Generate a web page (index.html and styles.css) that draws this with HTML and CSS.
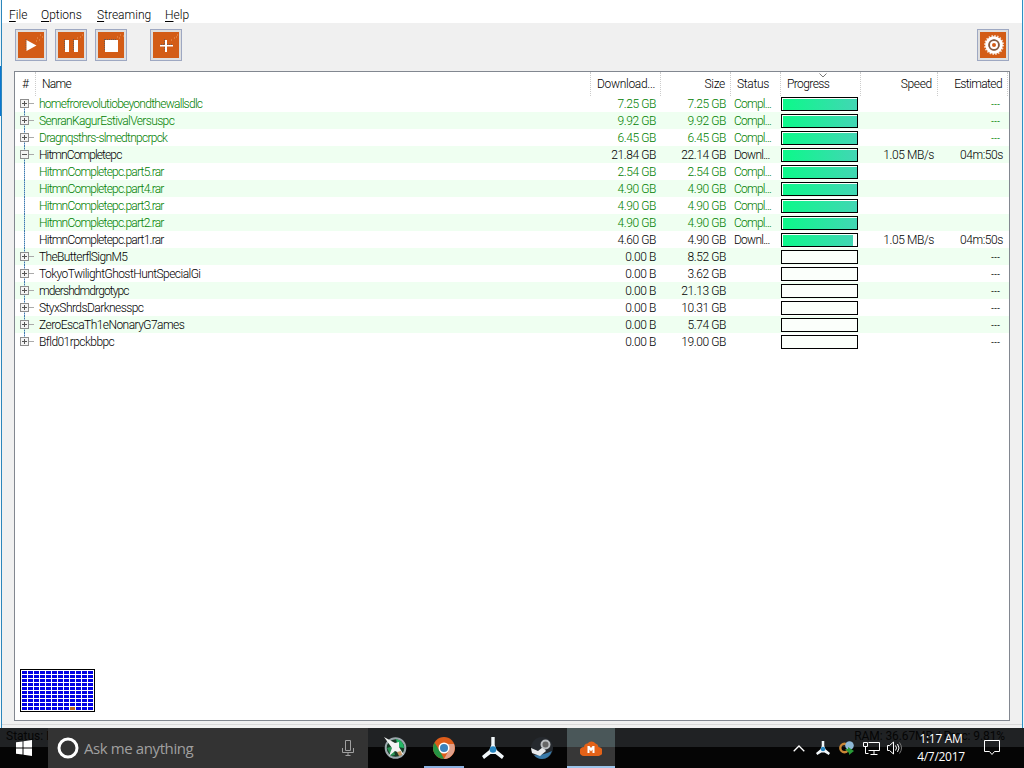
FILE: index.html
```html
<!DOCTYPE html>
<html lang="en">
<head>
  <meta charset="UTF-8">
  <meta name="viewport" content="width=device-width, initial-scale=1.0">
  <title>Downloads</title>
  <link rel="stylesheet" href="styles.css">
</head>
<body>
  <div class="window">
    <div class="menu">
      <span class="m-file"><u>F</u>ile</span>
      <span class="m-options"><u>O</u>ptions</span>
      <span class="m-streaming"><u>S</u>treaming</span>
      <span class="m-help"><u>H</u>elp</span>
    </div>

    <div class="toolbar">
      <button class="tool"><svg width="26" height="26" viewBox="0 0 26 26"><path class="shade" d="M8 7v12"/><path class="white" d="M8.500 8L18.500 13.500L8.500 19z"/><path class="sparkle" d="M19 6h1M21 8h1M22 3h1M24 5h1M18 9h1"/></svg></button>
      <button class="tool"><svg width="26" height="26" viewBox="0 0 26 26"><path class="shade" d="M6.500 7v12M15.500 7v12"/><path class="white" d="M7 8h4v12H7zM16 8h4v12h-4z"/><path class="sparkle" d="M19 6h1M22 5h1M24 3h1"/></svg></button>
      <button class="tool"><svg width="26" height="26" viewBox="0 0 26 26"><path class="shade" d="M6.500 7v12M7 7.500h12"/><path class="white" d="M7 8h13v12H7z"/><path class="sparkle" d="M19 5h1M21 6h1M22 3h1M25 4h1"/></svg></button>
      <button class="tool add"><svg width="26" height="26" viewBox="0 0 26 26"><path class="shade" d="M11.500 7v12M8 12.500h11"/><path class="white" d="M12 8h2v5h6v1.500h-6V20h-2v-5.500H7V13h5z"/><path class="sparkle" d="M18 8h1M21 6h1M23 5h1M24 3h1"/></svg></button>
      <button class="tool settings"><svg width="26" height="26" viewBox="0 0 26 26"><circle cx="14" cy="13" r="9" fill="none" stroke="#f3d9c8" stroke-width="2" stroke-dasharray="1.500 1.327"/><circle cx="14" cy="13" r="7.200" fill="none" stroke="#fff" stroke-width="3.200"/><circle cx="14" cy="13" r="4.800" fill="none" stroke="#7b5c49" stroke-width="1.800"/><circle cx="14" cy="13" r="3" fill="none" stroke="#fff" stroke-width="2"/></svg></button>
    </div>

    <div class="list">
      <div class="head">
        <span class="hash">#</span><span class="name">Name</span><span class="num">Download...</span><span class="num">Size</span><span>Status</span><span class="sorted">Progress<svg width="8" height="5" viewBox="0 0 8 5"><path d="M.5.500L4 4L7.500.500" fill="none" stroke="#777"/></svg></span><span class="num">Speed</span><span class="num estimated">Estimated</span>
      </div>
      <div class="rows">
        <div class="row done"><i class="node"></i><span class="name w1">homefrorevolutiobeyondthewallsdlc</span><span class="num">7.25 GB</span><span class="num">7.25 GB</span><span class="status">Compl...</span><div class="bar"><b></b></div><span></span><span class="num none">---</span></div>
        <div class="row done"><i class="node"></i><span class="name w2">SenranKagurEstivalVersuspc</span><span class="num">9.92 GB</span><span class="num">9.92 GB</span><span class="status">Compl...</span><div class="bar"><b></b></div><span></span><span class="num none">---</span></div>
        <div class="row done"><i class="node"></i><span class="name w1">Dragnqsthrs-slmedtnpcrpck</span><span class="num">6.45 GB</span><span class="num">6.45 GB</span><span class="status">Compl...</span><div class="bar"><b></b></div><span></span><span class="num none">---</span></div>
        <div class="row"><i class="node open"></i><span class="name w3">HitmnCompletepc</span><span class="num">21.84 GB</span><span class="num">22.14 GB</span><span class="status">Downl...</span><div class="bar"><b></b></div><span class="num speed">1.05 MB/s</span><span class="num">04m:50s</span></div>
        <div class="row done"><i class="line"></i><span class="name part">HitmnCompletepc.part5.rar</span><span class="num">2.54 GB</span><span class="num">2.54 GB</span><span class="status">Compl...</span><div class="bar"><b></b></div></div>
        <div class="row done"><i class="line"></i><span class="name part">HitmnCompletepc.part4.rar</span><span class="num">4.90 GB</span><span class="num">4.90 GB</span><span class="status">Compl...</span><div class="bar"><b></b></div></div>
        <div class="row done"><i class="line"></i><span class="name part">HitmnCompletepc.part3.rar</span><span class="num">4.90 GB</span><span class="num">4.90 GB</span><span class="status">Compl...</span><div class="bar"><b></b></div></div>
        <div class="row done"><i class="line"></i><span class="name part">HitmnCompletepc.part2.rar</span><span class="num">4.90 GB</span><span class="num">4.90 GB</span><span class="status">Compl...</span><div class="bar"><b></b></div></div>
        <div class="row"><i class="line"></i><span class="name part">HitmnCompletepc.part1.rar</span><span class="num">4.60 GB</span><span class="num">4.90 GB</span><span class="status">Downl...</span><div class="bar"><b style="width: 94%"></b></div><span class="num speed">1.05 MB/s</span><span class="num">04m:50s</span></div>
        <div class="row"><i class="node"></i><span class="name w2">TheButterflSignM5</span><span class="num">0.00 B</span><span class="num">8.52 GB</span><span></span><div class="bar"></div><span></span><span class="num none">---</span></div>
        <div class="row"><i class="node"></i><span class="name">TokyoTwilightGhostHuntSpecialGi</span><span class="num">0.00 B</span><span class="num">3.62 GB</span><span></span><div class="bar"></div><span></span><span class="num none">---</span></div>
        <div class="row"><i class="node"></i><span class="name w3">mdershdmdrgotypc</span><span class="num">0.00 B</span><span class="num">21.13 GB</span><span></span><div class="bar"></div><span></span><span class="num none">---</span></div>
        <div class="row"><i class="node"></i><span class="name">StyxShrdsDarknesspc</span><span class="num">0.00 B</span><span class="num">10.31 GB</span><span></span><div class="bar"></div><span></span><span class="num none">---</span></div>
        <div class="row"><i class="node"></i><span class="name">ZeroEscaTh1eNonaryG7ames</span><span class="num">0.00 B</span><span class="num">5.74 GB</span><span></span><div class="bar"></div><span></span><span class="num none">---</span></div>
        <div class="row"><i class="node"></i><span class="name">Bfld01rpckbbpc</span><span class="num">0.00 B</span><span class="num">19.00 GB</span><span></span><div class="bar"></div><span></span><span class="num none">---</span></div>
      </div>
      <div class="pieces"><i></i></div>
    </div>
  </div>

  <div class="taskbar">
    <span class="ghost ghost-left">Status: D</span>
    <span class="ghost ghost-right">RAM: 36.67MB / Proc: 9.81%</span>
    <div class="start"><svg width="16" height="16" viewBox="0 0 16 16" fill="#fff"><path d="M0 2.300L6.500 1.400V7.500H0zM7.500 1.200L16 0v7.500H7.500zM0 8.500h6.500v6.100L0 13.700zM7.500 8.500H16V16l-8.500-1.200z"/></svg></div>
    <div class="search">
      <svg width="22" height="22" viewBox="0 0 22 22"><circle cx="11" cy="11" r="9" fill="none" stroke="#fff" stroke-width="3"/></svg>
      <span>Ask me anything</span>
      <svg class="mic" width="12" height="18" viewBox="0 0 12 18" fill="none" stroke="#a0a0a0"><path d="M3.500 1.500h5v10h-5zM.5 9v4.500h11V9M6 13.500v3M3.500 16.500h5"/></svg>
    </div>
    <div class="apps">
      <div class="app"><svg width="24" height="24" viewBox="0 0 24 24"><circle cx="12.500" cy="12" r="9.800" fill="#173a26" stroke="#9ba8ad" stroke-width="2"/><path d="M13 3q8 2 8 9l-6-1z" fill="#23b765"/><path d="M4 12l6-2 2 9-4 1z" fill="#2a9455"/><path d="M1 1l11 6 4-1v5l5 8-9-4-6 5 3-8z" fill="#f1f4f2"/><path d="M14 16l4-1 1 4-3 1z" fill="#c99662"/></svg></div>
      <div class="app running"><svg width="22" height="22" viewBox="0 0 22 22"><circle cx="11" cy="11" r="11" fill="#de5d1b"/><path d="M1.500 5.500L8 16l3 6A11 11 0 0 1 1.500 5.500z" fill="#259343"/><path d="M21 7a11 11 0 0 1-10 15l5-9-2-6z" fill="#e0a08a"/><circle cx="11" cy="11" r="5.500" fill="#fff"/><circle cx="11" cy="11" r="4" fill="#3b83bd"/></svg></div>
      <div class="app"><svg width="22" height="22" viewBox="0 0 22 22"><path d="M9.300 0h3.400v8l2 5L22 19l-2 3-6.500-5h-5L2 22l-2-3 7.300-6 2-5z" fill="#f2f8fb"/><circle cx="11" cy="12.500" r="3.300" fill="#2585c1"/></svg></div>
      <div class="app"><svg width="22" height="22" viewBox="0 0 22 22"><circle cx="11" cy="11" r="11" fill="#25292e"/><path d="M3 18q8 1 18-4-3 8-10 8-5 0-8-4z" fill="#3879a8"/><path d="M0 11l7 3 5-4 3 4-6 5-8-3z" fill="#e8eaec"/><circle cx="14.500" cy="7.500" r="4" fill="#666" stroke="#b9bcbf" stroke-width="2"/></svg></div>
      <div class="app active"><svg width="22" height="16" viewBox="0 0 22 16"><path d="M4 16a4.500 4.500 0 0 1 0-9 4 4 0 0 1 3.500-3.500 5 5 0 0 1 8 0A4 4 0 0 1 18.500 7a4.500 4.500 0 0 1-.5 9z" fill="#e36218"/><path d="M7.500 13V6h2L11 8l1.500-2h2v7h-2V9.500L11 11.500 9.500 9.500V13z" fill="#fff"/></svg></div>
    </div>
    <div class="tray">
      <svg class="chevron" width="12" height="7" viewBox="0 0 12 7"><path d="M.7 6.300L6 1l5.300 5.300" fill="none" stroke="#fff" stroke-width="1.300"/></svg>
      <svg class="tri" width="14" height="14" viewBox="0 0 22 22"><path d="M9 0h4v8l2 5 7 6-2 3-6.500-4h-5L2 22l-2-3 7-6 2-5z" fill="#f2f8fb"/><circle cx="11" cy="12.500" r="3.500" fill="#2585c1"/></svg>
      <svg class="idm" width="15" height="14" viewBox="0 0 15 14"><circle cx="5.500" cy="7" r="4.200" fill="none" stroke="#c98736" stroke-width="2.400"/><circle cx="10.500" cy="4.500" r="4.300" fill="#8eb9d8"/><path d="M6 8l3 0v-2l6 4-5 4v-2z" fill="#2a9a38"/></svg>
      <svg class="net" width="17" height="15" viewBox="0 0 17 15"><path d="M5.500 1.500h11v8h-11M.5 1.500h4v4h-4zM2.500 5.500v7h3M11 9.500v4M7.500 13.500h7" fill="none" stroke="#fff"/></svg>
      <svg class="vol" width="17" height="14" viewBox="0 0 17 14"><path d="M.5 4.500h2l4-3.500v12l-4-3.500h-2z" fill="none" stroke="#fff"/><path d="M8.500 4.500q2 2.500 0 5M10.500 3q3 4 0 8" fill="none" stroke="#fff"/><path d="M12.500 1.500q4 5.500 0 11" fill="none" stroke="#777"/></svg>
      <div class="clock"><span class="time">1:17 AM</span><span>4/7/2017</span></div>
      <svg class="note" width="16" height="16" viewBox="0 0 16 16"><path d="M.5.500h15v11h-5L8 14.500l-2.500-3h-5z" fill="none" stroke="#fff"/></svg>
    </div>
  </div>
</body>
</html>
```
FILE: styles.css
```css
* {
  box-sizing: border-box;
}
body {
  margin: 0;
  width: 1024px;
  height: 768px;
  overflow: hidden;
  display: flex;
  flex-direction: column;
  font-family: Roboto, "Liberation Sans", sans-serif;
  font-size: 12px;
  font-weight: 300;
  color: #000;
  background: linear-gradient(#e8f4fa 66px, #0b76cf 66px, #0b76cf 116px, #f4f9fb 116px) 0 0 / 2px 100% no-repeat #eaf5fa;
}
.window {
  height: 728px;
  margin: 0 1px;
  display: flex;
  flex-direction: column;
  border-left: 1px solid #2d86bb;
  border-right: 1px solid #2d8fc4;
  background: linear-gradient(#f0f0f0 724px, #d9d9d9 724px, #d9d9d9 725px, #f0f0f0 725px);
}
.menu {
  height: 23px;
  flex: none;
  display: flex;
  padding-left: 7px;
  line-height: 30px;
  background: #fff;
}
.menu span {
  white-space: nowrap;
}
.menu u {
  text-underline-offset: 2px;
}
.m-file {
  width: 32px;
}
.m-options {
  width: 56px;
}
.m-streaming {
  width: 68px;
}
.toolbar {
  height: 48px;
  flex: none;
  display: flex;
  gap: 8px;
  padding: 6px 13px 0 13px;
}
.tool {
  width: 32px;
  height: 32px;
  padding: 2px;
  border: 1px solid #9ea8c2;
  background: #dfdfdf;
}
.tool svg {
  display: block;
  background: #d35c16;
}
.add {
  margin-left: 15px;
}
.settings {
  margin-left: auto;
}
.white {
  fill: #fff;
}
.shade {
  stroke: #665b58;
  stroke-dasharray: 1 1;
  fill: none;
}
.sparkle {
  stroke: #ee9b5c;
  fill: none;
}
.list {
  width: 996px;
  height: 650px;
  margin-left: 12px;
  display: flex;
  flex-direction: column;
  border: 1px solid #828790;
  background: #fff;
}
.head, .row {
  display: grid;
  grid-template-columns: 21px 555px 70px 70px 50px 80px 77px 70px;
}
.head {
  height: 23px;
  line-height: 24px;
  letter-spacing: -0.3px;
}
.head span {
  padding: 0 5px 0 6px;
  white-space: nowrap;
  border-right: 1px dotted #ccc;
}
.head .hash {
  padding: 0 0 0 7px;
}
.head .name {
  letter-spacing: -0.7px;
}
.head .sorted {
  display: flex;
  letter-spacing: -0.6px;
}
.head .estimated {
  letter-spacing: -0.6px;
}
.sorted svg {
  margin: 1px 0 0 -10px;
}
.num {
  text-align: right;
}
.row {
  height: 17px;
  line-height: 18px;
  white-space: nowrap;
}
.row:nth-child(even) {
  background: #effff1;
}
.row span {
  padding: 0 5px 0 3px;
}
.row .num {
  letter-spacing: -0.4px;
}
.row .name {
  letter-spacing: -0.55px;
}
.row .w1 {
  letter-spacing: -0.73px;
}
.row .w2 {
  letter-spacing: -0.62px;
}
.row .w3 {
  letter-spacing: -0.9px;
}
.row .part {
  letter-spacing: -0.77px;
}
.row .status {
  letter-spacing: -0.75px;
}
.row .speed {
  padding-right: 4px;
}
.row .none {
  padding-right: 8px;
  font-family: "Liberation Sans", sans-serif;
  font-size: 9px;
  letter-spacing: 0;
}
.done {
  color: #008000;
}
.bar {
  width: 77px;
  height: 14px;
  margin-top: 2px;
  padding: 1px 0 0 1px;
  border: 1px solid #000;
  background: #fbfffb;
}
.bar b {
  display: block;
  height: 11px;
  background: linear-gradient(90deg, #0cf98a, #42d6b4);
}
.node, .line {
  height: 17px;
  background: repeating-linear-gradient(#3f79ad 0 1px, #9cbfdd 1px 2px) 9px 0 / 1px 17px no-repeat;
}
.node {
  background:
    linear-gradient(#555, #555) 7px 8px / 5px 1px no-repeat,
    linear-gradient(#555, #555) 9px 6px / 1px 5px no-repeat,
    linear-gradient(#f4f4f4, #f4f4f4) 6px 5px / 7px 7px no-repeat,
    linear-gradient(#8d8d8d, #8d8d8d) 5px 4px / 9px 9px no-repeat,
    linear-gradient(#aaa, #aaa) 14px 8px / 5px 1px no-repeat,
    repeating-linear-gradient(#3f79ad 0 1px, #9cbfdd 1px 2px) 9px 0 / 1px 17px no-repeat;
}
.node.open {
  background:
    linear-gradient(#555, #555) 7px 8px / 5px 1px no-repeat,
    linear-gradient(#f4f4f4, #f4f4f4) 6px 5px / 7px 7px no-repeat,
    linear-gradient(#8d8d8d, #8d8d8d) 5px 4px / 9px 9px no-repeat,
    linear-gradient(#aaa, #aaa) 14px 8px / 5px 1px no-repeat,
    repeating-linear-gradient(#3f79ad 0 1px, #9cbfdd 1px 2px) 9px 0 / 1px 17px no-repeat;
}
.row:first-child .node, .row:last-child .node {
  background-size: 5px 1px, 1px 5px, 7px 7px, 9px 9px, 5px 1px, 1px 9px;
}
.row:first-child .node {
  background-position: 7px 8px, 9px 6px, 6px 5px, 5px 4px, 14px 8px, 9px 8px;
}
.pieces {
  width: 75px;
  height: 43px;
  margin: auto 0 8px 5px;
  padding: 1px;
  border: 1px solid #000;
  background:
    linear-gradient(#fff, #fff) 0 0 / 100% 1px no-repeat,
    linear-gradient(90deg, #fff 1px, transparent 1px) 0 0 / 6px 4px,
    linear-gradient(#fff 1px, #0000e4 1px) 0 0 / 6px 4px;
}
.pieces i {
  display: block;
  width: 5px;
  height: 3px;
  margin: 36px 0 0 48px;
  background: #b9621f;
}
.taskbar {
  position: relative;
  height: 40px;
  display: flex;
  background: linear-gradient(#202224 19px, #050505 19px);
  font-family: "Open Sans", sans-serif;
  font-weight: 400;
  color: #fff;
}
.ghost {
  position: absolute;
  top: 0;
  line-height: 17px;
  font-family: Roboto, sans-serif;
  color: #050505;
  white-space: nowrap;
}
.ghost-left {
  left: 6px;
}
.ghost-right {
  right: 19px;
  letter-spacing: -0.1px;
}
.start {
  width: 48px;
  padding: 12px 0 0 16px;
}
.search {
  width: 320px;
  display: flex;
  align-items: center;
  padding: 0 14px 0 9px;
  background: #333;
  color: #a0a0a0;
  font-size: 15px;
  letter-spacing: -0.4px;
  z-index: 1;
}
.search span {
  margin-left: 5px;
}
.mic {
  margin-left: auto;
}
.apps {
  display: flex;
  margin-left: 3px;
  gap: 1px;
}
.app {
  width: 48px;
  display: flex;
  align-items: center;
  justify-content: center;
}
.running {
  background: linear-gradient(#8ab0e0, #8ab0e0) 4px 38px / 40px 2px no-repeat;
}
.active {
  background: linear-gradient(#4a5759 19px, #373737 19px, #373737 38px, #9cc4ea 38px);
}
.tray {
  margin-left: auto;
  display: flex;
  align-items: center;
  z-index: 1;
}
.tri {
  margin-left: 11px;
}
.idm {
  margin-left: 9px;
}
.net {
  margin-left: 9px;
}
.vol {
  margin-left: 7px;
}
.clock {
  width: 60px;
  margin-left: 7px;
  display: flex;
  flex-direction: column;
  align-items: center;
  line-height: 18px;
  font-size: 12px;
  letter-spacing: -0.3px;
}
.note {
  margin: 0 24px 0 13px;
}
```
